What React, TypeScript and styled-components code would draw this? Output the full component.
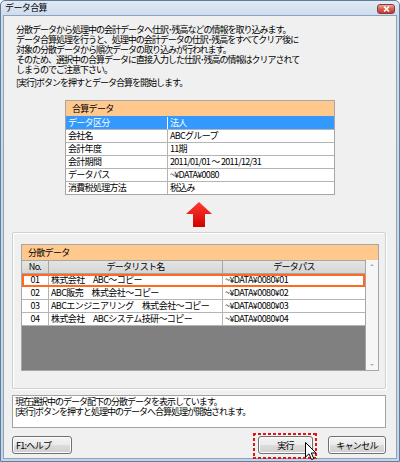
import React from "react";
import styled, { createGlobalStyle } from "styled-components";

const GlobalStyle = createGlobalStyle`
  html, body {
    margin: 0;
    padding: 0;
  }
  body {
    width: 400px;
    height: 462px;
    overflow: hidden;
    background: #ffffff;
    font-family: "Noto Sans CJK JP", "Noto Sans", sans-serif;
    color: #000;
  }
`;

const Window = styled.div`
  width: 400px;
  height: 462px;
  box-sizing: border-box;
  display: flex;
  flex-direction: column;
  padding: 0 2px 2px;
  border: 1px solid #627c9c;
  border-radius: 5px 5px 0 0;
  background: linear-gradient(#e2eaf4, #cbdaec 16px, #c4d4e8);
`;

const TitleBar = styled.div`
  height: 14px;
  display: flex;
  align-items: center;
  justify-content: space-between;
  padding: 0 2px 0 2px;
`;

const Title = styled.span`
  font-size: 9px;
  letter-spacing: -0.6px;
  line-height: 14px;
`;

const CloseButton = styled.div`
  width: 18px;
  height: 10px;
  margin-top: 2px;
  box-sizing: border-box;
  border: 1px solid #8a3a3a;
  border-radius: 3px;
  background: linear-gradient(#eaa898, #d4604f 50%, #c13a2c);
  display: flex;
  align-items: center;
  justify-content: center;
`;

const Content = styled.div`
  flex: 1;
  position: relative;
  display: flex;
  flex-direction: column;
  padding: 0 10px 0 8px;
  background: #f0f0f0;
  border: 1px solid #8fa3bd;
`;

const Intro = styled.div`
  margin: 9px 0 0 4px;
  font-size: 9px;
  line-height: 10px;
  letter-spacing: -1px;
`;

const Para = styled.p<{ $gap?: number }>`
  margin: ${({ $gap }) => $gap ?? 0}px 0 0;
`;

const SummaryPanel = styled.div`
  margin: 12px 0 0 53px;
  width: 268px;
  border: 1px solid #a6a6a6;
  background: #fff;
`;

const PanelHeader = styled.div`
  height: 15px;
  display: flex;
  align-items: center;
  padding-left: 6px;
  background: #ffc98e;
  font-size: 9px;
  letter-spacing: -0.7px;
`;

const SummaryRow = styled.div<{ $selected?: boolean }>`
  display: grid;
  grid-template-columns: 101px 1fr;
  height: 13px;
  box-sizing: border-box;
  border-top: 1px solid ${({ $selected }) => ($selected ? "#3399ff" : "#b4b4b4")};
  background: ${({ $selected }) => ($selected ? "#3399ff" : "#fff")};
  color: ${({ $selected }) => ($selected ? "#fff" : "#000")};
  font-size: 9px;
  line-height: 12px;
  letter-spacing: -0.7px;
`;

const Cell = styled.div<{ $divider?: string; $center?: boolean }>`
  padding: 0 2px;
  white-space: nowrap;
  overflow: hidden;
  text-align: ${({ $center }) => ($center ? "center" : "left")};
  border-left: ${({ $divider }) => ($divider ? `1px solid ${$divider}` : "none")};
`;

const ArrowWrap = styled.div`
  height: 25px;
  margin-top: 7px;
  display: flex;
  justify-content: center;
`;

const GroupBox = styled.div`
  margin-top: 5px;
  height: 157px;
  box-sizing: border-box;
  padding: 11px 6px 0 8px;
  border: 1px solid #d0d0d0;
  border-radius: 2px;
  box-shadow: inset 1px 1px 0 #fff, 1px 1px 0 #fff;
`;

const ListPanel = styled.div`
  border: 1px solid #a6a6a6;
  background: #fff;
`;

const ListBody = styled.div`
  display: flex;
  height: 110px;
`;

const ListArea = styled.div`
  flex: 1;
  display: flex;
  flex-direction: column;
  background: #808080;
`;

const ColumnHeader = styled.div`
  display: grid;
  grid-template-columns: 26px 174px 1fr;
  height: 14px;
  box-sizing: border-box;
  border-top: 1px solid #a6a6a6;
  border-bottom: 1px solid #a6a6a6;
  background: linear-gradient(#e4e4e4, #d6d6d6);
  font-size: 9px;
  line-height: 12px;
  letter-spacing: -0.7px;
`;

const ListRow = styled.div<{ $current?: boolean }>`
  display: grid;
  grid-template-columns: 26px 174px 1fr;
  height: 13px;
  box-sizing: border-box;
  background: #fff;
  border-bottom: 1px solid #b4b4b4;
  outline: ${({ $current }) => ($current ? "2px solid #ff6a1f" : "none")};
  outline-offset: -2px;
  position: relative;
  font-size: 9px;
  line-height: 12px;
  letter-spacing: -0.6px;
`;

const Scrollbar = styled.div`
  width: 13px;
  display: flex;
  flex-direction: column;
  justify-content: space-between;
  align-items: center;
  padding: 4px 0;
  box-sizing: border-box;
  background: #f6f6f6;
  border-left: 1px solid #a6a6a6;
`;

const ScrollArrow = styled.div<{ $down?: boolean }>`
  width: 0;
  height: 0;
  border-left: 2px solid transparent;
  border-right: 2px solid transparent;
  ${({ $down }) =>
    $down ? "border-top: 2px solid #b0b0b0;" : "border-bottom: 2px solid #b0b0b0;"}
`;

const MessageBox = styled.div`
  margin-top: 6px;
  height: 33px;
  box-sizing: border-box;
  padding: 1px 2px;
  border: 1px solid #a3a3a3;
  background: #fff;
  font-size: 9px;
  line-height: 10px;
  letter-spacing: -1px;
`;

const ButtonRow = styled.div`
  margin-top: 8px;
  display: flex;
  align-items: center;
`;

const dots = "#e0151b 0 3px, transparent 3px 5px";

const Button = styled.button<{ $width: number; $left?: boolean; $focused?: boolean }>`
  position: relative;
  width: ${({ $width }) => $width}px;
  height: 18px;
  padding: 0 3px;
  border: 1px solid #707070;
  border-radius: 3px;
  background: linear-gradient(#f3f3f3, #ebebeb 50%, #dcdcdc 51%, #cfcfcf);
  box-shadow: inset 0 0 0 1px #fcfcfc;
  font-family: inherit;
  font-size: 9px;
  letter-spacing: -0.7px;
  color: #000;
  text-align: ${({ $left }) => ($left ? "left" : "center")};

  &::after {
    content: "";
    display: ${({ $focused }) => ($focused ? "block" : "none")};
    position: absolute;
    left: -6px;
    right: -5px;
    top: -4px;
    bottom: -6px;
    background:
      repeating-linear-gradient(90deg, ${dots}) top / 100% 2px no-repeat,
      repeating-linear-gradient(90deg, ${dots}) bottom / 100% 2px no-repeat,
      repeating-linear-gradient(180deg, ${dots}) left / 2px 100% no-repeat,
      repeating-linear-gradient(180deg, ${dots}) right / 2px 100% no-repeat;
    pointer-events: none;
  }
`;

const Spacer = styled.div`
  flex: 1;
`;

const Cursor = styled.svg`
  position: absolute;
  left: 46px;
  top: 5px;
  z-index: 1;
`;

const summary = [
  ["データ区分", "法人"],
  ["会社名", "ABCグループ"],
  ["会計年度", "11期"],
  ["会計期間", "2011/01/01 〜 2011/12/31"],
  ["データパス", "~¥DATA¥0080"],
  ["消費税処理方法", "税込み"],
];

const lists = [
  ["01", "株式会社　ABC〜コピー", "~¥DATA¥0080¥01"],
  ["02", "ABC販売　株式会社〜コピー", "~¥DATA¥0080¥02"],
  ["03", "ABCエンジニアリング　株式会社〜コピー", "~¥DATA¥0080¥03"],
  ["04", "株式会社　ABCシステム技研〜コピー", "~¥DATA¥0080¥04"],
];

const UpArrow = () => (
  <svg width="28" height="25" viewBox="0 0 28 25">
    <defs>
      <linearGradient id="red" x1="0" y1="0" x2="0" y2="1">
        <stop offset="0" stopColor="#ff3b30" />
        <stop offset="1" stopColor="#d10000" />
      </linearGradient>
    </defs>
    <path d="M14 0 L27 12 L20 12 L20 25 L8 25 L8 12 L1 12 Z" fill="url(#red)" />
  </svg>
);

const App = () => (
  <>
    <GlobalStyle />
    <Window>
      <TitleBar>
        <Title>データ合算</Title>
        <CloseButton>
          <svg width="7" height="6" viewBox="0 0 7 6">
            <path d="M1 0.5 L6 5.5 M6 0.5 L1 5.5" stroke="#fff" strokeWidth="1.6" />
          </svg>
        </CloseButton>
      </TitleBar>
      <Content>
        <Intro>
          <Para>
            分散データから処理中の会計データへ仕訳･残高などの情報を取り込みます。
            <br />
            データ合算処理を行うと、処理中の会計データの仕訳･残高をすべてクリア後に
            <br />
            対象の分散データから順次データの取り込みが行われます。
            <br />
            そのため、選択中の合算データに直接入力した仕訳･残高の情報はクリアされて
            <br />
            しまうのでご注意下さい。
          </Para>
          <Para $gap={3}>[実行]ボタンを押すとデータ合算を開始します。</Para>
        </Intro>

        <SummaryPanel>
          <PanelHeader>合算データ</PanelHeader>
          {summary.map(([label, value], i) => (
            <SummaryRow key={label} $selected={i === 0}>
              <Cell>{label}</Cell>
              <Cell $divider={i === 0 ? "#ffffff" : "#b4b4b4"}>{value}</Cell>
            </SummaryRow>
          ))}
        </SummaryPanel>

        <ArrowWrap>
          <UpArrow />
        </ArrowWrap>

        <GroupBox>
          <ListPanel>
            <PanelHeader>分散データ</PanelHeader>
            <ListBody>
              <ListArea>
                <ColumnHeader>
                  <Cell $center>No.</Cell>
                  <Cell $center $divider="#a6a6a6">
                    データリスト名
                  </Cell>
                  <Cell $center $divider="#a6a6a6">
                    データパス
                  </Cell>
                </ColumnHeader>
                {lists.map(([no, name, path], i) => (
                  <ListRow key={no} $current={i === 0}>
                    <Cell $center>{no}</Cell>
                    <Cell $divider="#b4b4b4">{name}</Cell>
                    <Cell $divider="#b4b4b4">{path}</Cell>
                  </ListRow>
                ))}
              </ListArea>
              <Scrollbar>
                <ScrollArrow />
                <ScrollArrow $down />
              </Scrollbar>
            </ListBody>
          </ListPanel>
        </GroupBox>

        <MessageBox>
          現在選択中のデータ配下の分散データを表示しています。
          <br />
          [実行]ボタンを押すと処理中のデータへ合算処理が開始されます。
        </MessageBox>

        <ButtonRow>
          <Button $width={60} $left>
            F1:ヘルプ
          </Button>
          <Spacer />
          <Button $width={55} $focused>
            実行
            <Cursor width="12" height="19" viewBox="0 0 12 19">
              <path
                d="M0.5 0.5 L0.5 15 L4 11.8 L6.6 17.6 L8.8 16.6 L6.3 11 L11 11 Z"
                fill="#fff"
                stroke="#000"
                strokeWidth="1"
                strokeLinejoin="round"
              />
            </Cursor>
          </Button>
          <Button $width={58} style={{ marginLeft: 15 }}>
            キャンセル
          </Button>
        </ButtonRow>
      </Content>
    </Window>
  </>
);

export default App;
